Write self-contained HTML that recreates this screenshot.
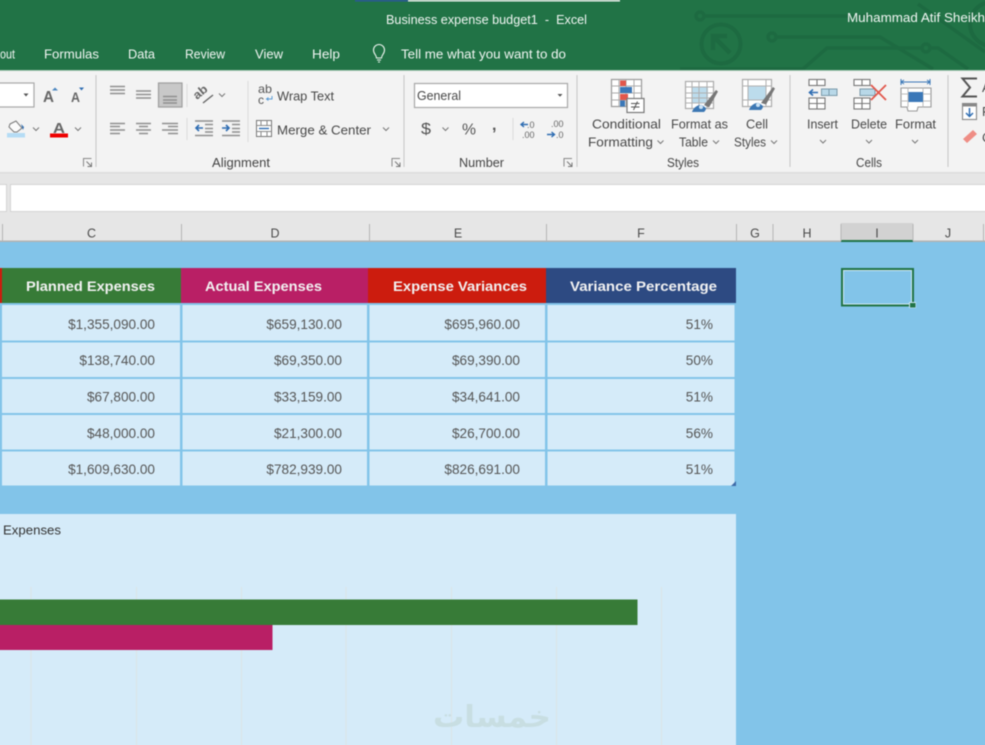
<!DOCTYPE html>
<html><head><meta charset="utf-8"><title>Business expense budget1 - Excel</title>
<style>
html,body{margin:0;padding:0;background:#82c4e9;overflow:hidden;width:985px;height:745px}
#wrap{position:relative;width:985px;height:745px;overflow:hidden;contain:paint}
svg{display:block;position:absolute;left:-10px;top:-10px;filter:blur(.45px)}
text{font-family:"Liberation Sans",sans-serif}
.w{fill:#f1f6f3;font-size:13px}
.r{fill:#474747;font-size:13px}
.n{fill:#555;font-size:13.6px;text-anchor:end}
.h{fill:#f2f2f2;font-size:13.5px;font-weight:bold}
.c{fill:#444;font-size:13px;text-anchor:middle}
.ln{stroke:#8f8f8f;stroke-width:1.4;fill:none}
.chev{stroke:#777;stroke-width:1;fill:none}
</style></head><body><div id="wrap">
<svg width="1005" height="765" viewBox="-10 -10 1005 765" xmlns="http://www.w3.org/2000/svg">
<defs>
<g id="ch"><path class="chev" d="M-3-1.5 0 1.5 3-1.5"/></g>
<g id="lau"><path d="M-4 4V-4H4" stroke="#888" fill="none"/><path d="M-1-1 4 4M4 0V4H0" stroke="#777" fill="none"/></g>
</defs>
<!-- title bar -->
<rect x="-10" y="-10" width="1005" height="80" fill="#217346"/>
<rect x="355" width="53" height="1.5" fill="#2b579a"/>
<rect x="408" width="212" height="1.5" fill="#f4f4f4"/>
<g stroke="#1d6a41" stroke-width="3.4" fill="none">
<circle cx="700" cy="16" r="4"/><path d="M704 16H870"/>
<circle cx="721" cy="44" r="19.5" stroke-width="4"/>
<path d="M715 38 730 53M713 50V36H727" stroke-width="4.5"/>
<circle cx="772" cy="37" r="4"/><path d="M776 37H880L933 69"/>
<path d="M803 69 827 48H922"/><circle cx="926" cy="48" r="4"/><path d="M930 48H938L968 69"/>
<path d="M918 4 985 52"/><circle cx="992" cy="24" r="22" stroke-width="4"/>
<path d="M680 69H803"/>
</g>
<text class="w" x="386" y="24" textLength="201" lengthAdjust="spacingAndGlyphs" xml:space="preserve">Business expense budget1  -  Excel</text>
<text class="w" x="847" y="22" textLength="138" lengthAdjust="spacingAndGlyphs">Muhammad Atif Sheikh</text>
<text class="w" x="0" y="58.5" textLength="15" lengthAdjust="spacingAndGlyphs">out</text>
<text class="w" x="44" y="58.5" textLength="55" lengthAdjust="spacingAndGlyphs">Formulas</text>
<text class="w" x="128" y="58.5" textLength="27" lengthAdjust="spacingAndGlyphs">Data</text>
<text class="w" x="185" y="58.5" textLength="40" lengthAdjust="spacingAndGlyphs">Review</text>
<text class="w" x="255" y="58.5" textLength="28" lengthAdjust="spacingAndGlyphs">View</text>
<text class="w" x="312" y="58.5" textLength="28" lengthAdjust="spacingAndGlyphs">Help</text>
<path d="M376.5 58c0-3-3-4-3-8a5.5 5.5 0 0 1 11 0c0 4-3 5-3 8zM377 60h4M378 62h2" fill="none" stroke="#eef5f0" stroke-width="1.1"/>
<text class="w" x="401" y="58.5" textLength="165" lengthAdjust="spacingAndGlyphs">Tell me what you want to do</text>
<!-- ribbon -->
<rect x="-10" y="70" width="1005" height="102" fill="#f3f3f3"/>
<rect x="-10" y="70" width="1005" height="1" fill="#a9c9b6"/>
<rect x="-10" y="172" width="1005" height="70" fill="#e6e6e6"/>
<rect x="-10" y="172" width="1005" height="1.5" fill="#dcdcdc"/>
<g stroke="#c6c6c6" stroke-width="1">
<path d="M96 75V167M404 75V167M577 75V167M790 75V167M948 75V167"/>
<path d="M187 84V107M187 118V140M248 81V142M513 118V140" stroke="#dadada"/>
</g>
<!-- font area -->
<rect x="-12" y="83" width="46" height="24" fill="#fff" stroke="#a8a8a8" stroke-width="1.2"/>
<path d="M23.5 93.5h5l-2.5 3z" fill="#555"/>
<text x="43" y="102" font-size="16" font-weight="bold" fill="#666" textLength="11" lengthAdjust="spacingAndGlyphs">A</text>
<path d="M52 90.5h6l-3-3z" fill="#4a86c0"/>
<text x="71" y="102" font-size="13.5" font-weight="bold" fill="#666" textLength="9" lengthAdjust="spacingAndGlyphs">A</text>
<path d="M79 87.5h5l-2.5 3z" fill="#2f6db2"/>
<path d="M10 124l6-3 6 7-5 4h-3l-5-5z" fill="#fbfbfb" stroke="#777"/>
<path d="M21 124l3 3-1 3z" fill="#2f6db2"/>
<rect x="7" y="133" width="18" height="4.5" fill="#b5dcf5"/>
<use href="#ch" x="36" y="129"/>
<text x="53" y="133" font-size="15" font-weight="bold" fill="#666" textLength="12" lengthAdjust="spacingAndGlyphs">A</text>
<rect x="50" y="133.5" width="18" height="4" fill="#ee0000"/>
<use href="#ch" x="78" y="129"/>
<use href="#lau" x="87.5" y="162.5"/>
<!-- alignment -->
<g class="ln">
<path d="M110 86.500h15M110 90h15M110 93.500h15"/>
<path d="M136 91h15M136 94.500h15M136 98h15"/>
</g>
<rect x="158.500" y="83" width="23.500" height="24" fill="#c8c8c8" stroke="#9d9d9d" stroke-width="1.2"/>
<path class="ln" d="M163 96.500h14M163 100h14M163 103h14"/>
<g class="ln">
<path d="M110 123.500h15M110 126.500h10M110 130h15M110 133.500h10"/>
<path d="M136 123.500h15M139 126.500h9M136 130h15M139 133.500h9"/>
<path d="M162 123.500h16M168 126.500h10M162 130h16M168 133.500h10"/>
</g>
<text x="0" y="0" transform="translate(197 100) rotate(-40)" font-size="12" font-weight="bold" fill="#666" textLength="15" lengthAdjust="spacingAndGlyphs">ab</text>
<path d="M203 103 213 95" stroke="#666" stroke-width="1.4" fill="none"/>
<use href="#ch" x="222" y="95"/>
<g class="ln"><path d="M195 121h18M205 124.500h8M205 128.500h8M205 132h8M195 135.500h18M222 121h18M232 124.500h8M232 128.500h8M232 132h8M222 135.500h18"/></g>
<path d="M196 128h7M199 125l-3 3 3 3" stroke="#2f6db2" stroke-width="1.6" fill="none"/>
<path d="M222 128h7M226 125l3 3-3 3" stroke="#2f6db2" stroke-width="1.6" fill="none"/>
<text x="258" y="93" font-size="12" fill="#555" textLength="14" lengthAdjust="spacingAndGlyphs">ab</text>
<text x="258" y="104" font-size="12" fill="#555">c</text>
<path d="M272 96v3h-5M268.500 97.500l-2 1.500 2 1.500" stroke="#5a9bd5" fill="none"/>
<text class="r" x="277" y="100.500" textLength="57" lengthAdjust="spacingAndGlyphs">Wrap Text</text>
<rect x="256.500" y="120.500" width="15" height="16" fill="#fff" stroke="#777"/>
<path d="M256.500 125.500h15M256.500 131.500h15M261 120.500v5M267 120.500v5M261 131.500v5M267 131.500v5" stroke="#888"/>
<path d="M259 128.500h10" stroke="#2f6db2" stroke-width="1.4"/>
<text class="r" x="277" y="134.500" textLength="94" lengthAdjust="spacingAndGlyphs">Merge &amp; Center</text>
<use href="#ch" x="386" y="129"/>
<use href="#lau" x="396" y="162.500"/>
<text class="c" x="241" y="167" textLength="58" lengthAdjust="spacingAndGlyphs">Alignment</text>
<!-- number -->
<rect x="414.500" y="83.500" width="153" height="24" fill="#fff" stroke="#a8a8a8" stroke-width="1.2"/>
<text class="r" x="417" y="100" textLength="44" lengthAdjust="spacingAndGlyphs">General</text>
<path d="M557.500 94h5l-2.500 2.800z" fill="#555"/>
<text x="421" y="134" font-size="16" fill="#555" textLength="10" lengthAdjust="spacingAndGlyphs">$</text>
<use href="#ch" x="445.500" y="129"/>
<text x="462" y="134.500" font-size="16" fill="#555" textLength="14" lengthAdjust="spacingAndGlyphs">%</text>
<text x="492" y="130" font-size="16" font-weight="bold" fill="#555">,</text>
<text x="527" y="128" font-size="9" fill="#666">.0</text><text x="522" y="138" font-size="9" fill="#666">.00</text>
<path d="M521 124.500h7M524 122l-3 2.500 3 2.500" stroke="#2f6db2" stroke-width="1.4" fill="none"/>
<text x="551" y="127" font-size="9" fill="#666">.00</text><text x="556" y="138" font-size="9" fill="#666">.0</text>
<path d="M547 134.500h7M551.500 132l3 2.500-3 2.500" stroke="#2f6db2" stroke-width="1.4" fill="none"/>
<use href="#lau" x="568" y="162.500"/>
<text class="c" x="481.500" y="167" textLength="45" lengthAdjust="spacingAndGlyphs">Number</text>
<!-- styles icons -->
<rect x="611.500" y="79.500" width="30" height="27" fill="#fff" stroke="#999" stroke-width="1.2"/>
<path d="M611.500 86h30M611.500 93h30M611.500 100h30M619 79.500v27M626 79.500v27M634 79.500v27" stroke="#aaa"/>
<rect x="620" y="80.500" width="6" height="5.500" fill="#e2574c"/>
<rect x="620" y="87" width="12" height="6" fill="#3b78b8"/>
<rect x="620" y="94" width="8" height="6" fill="#e2574c"/>
<rect x="620" y="100.500" width="5" height="6" fill="#3b78b8"/>
<rect x="627" y="98.500" width="17" height="14" fill="#fff" stroke="#777" stroke-width="1.2"/>
<path d="M631 103.500h8.500M631 107h8.500M637.500 101.500l-4 8.500" stroke="#555" fill="none"/>
<rect x="685.500" y="81.500" width="28" height="27" fill="#fff" stroke="#aaa" stroke-width="1.2"/>
<rect x="692" y="87" width="16" height="16" fill="#bcdcec"/>
<path d="M685.500 87h28M685.500 93h28M685.500 98h28M685.500 103h28M692 81.500v27M699 81.500v27M707 81.500v27" stroke="#b0b0b0"/>
<path d="M704 105 716 90l2 1.500-9 16z" fill="#777"/>
<path d="M692 112c1-4 6-8 10-7l4 3c0 2-1 3-2 4z" fill="#3d78b4"/><circle cx="701" cy="107" r="2" fill="#cbe3f5"/>
<rect x="742.500" y="79.500" width="29" height="27" fill="#fff" stroke="#aaa" stroke-width="1.2"/>
<rect x="748" y="86" width="18" height="14" fill="#bcdcec"/>
<path d="M748 79.500v27M766 79.500v27M742.500 86h29M742.500 100h29" stroke="#b0b0b0"/>
<path d="M761 103 773 87l2 1.500-9 16z" fill="#777"/>
<path d="M749 110c1-4 6-8 10-7l4 3c0 2-1 3-2 4z" fill="#3d78b4"/><circle cx="758" cy="105" r="2" fill="#cbe3f5"/>
<text class="r" x="592" y="128.500" textLength="69" lengthAdjust="spacingAndGlyphs">Conditional</text>
<text class="r" x="588" y="146.500" textLength="65" lengthAdjust="spacingAndGlyphs">Formatting</text>
<use href="#ch" x="660.500" y="142"/>
<text class="r" x="671" y="128.500" textLength="57" lengthAdjust="spacingAndGlyphs">Format as</text>
<text class="r" x="679" y="146.500" textLength="29" lengthAdjust="spacingAndGlyphs">Table</text>
<use href="#ch" x="716" y="142"/>
<text class="r" x="746" y="128.500" textLength="22" lengthAdjust="spacingAndGlyphs">Cell</text>
<text class="r" x="734" y="146.500" textLength="32" lengthAdjust="spacingAndGlyphs">Styles</text>
<use href="#ch" x="774" y="142"/>
<text class="c" x="683" y="167" textLength="32" lengthAdjust="spacingAndGlyphs">Styles</text>
<!-- cells icons -->
<g fill="#fff" stroke="#777" stroke-width="1.1">
<rect x="809" y="79.500" width="16" height="6"/><path d="M817 79.500v6" fill="none"/>
<rect x="809" y="98" width="16" height="11"/><path d="M817 98v11M809 103.500h16" fill="none"/>
<rect x="854" y="79.500" width="16" height="6"/><path d="M862 79.500v6" fill="none"/>
<rect x="854" y="98" width="16" height="11"/><path d="M862 98v11M854 103.500h16" fill="none"/>
</g>
<rect x="821.500" y="89" width="15.500" height="6.500" fill="#b8d8e8" stroke="#7a9aaa"/><path d="M829 89v6.500" stroke="#7a9aaa"/>
<path d="M810 92.500h8M813 89.500l-3.500 3 3.500 3" stroke="#2f6db2" stroke-width="1.6" fill="none"/>
<rect x="860" y="89" width="15" height="6.500" fill="#b8d8e8" stroke="#7a9aaa"/>
<path d="M871 85 886 100M886 85 871 100" stroke="#e2574c" stroke-width="1.8"/>
<path d="M901 82h29M901 79v6M930 79v6M904 80l-3 2 3 2M927 80l3 2-3 2" stroke="#3b78b8" fill="none"/>
<path d="M901 88h30v19h-13l-1 4h-9l-1-4h-6z" fill="#fff" stroke="#999" stroke-width="1.1"/>
<path d="M901 94h30M901 101h30M908 88v19M923 88v19" stroke="#bbb"/>
<rect x="908.500" y="92" width="14.500" height="10" fill="#3b78b8"/>
<text class="r" x="807" y="128.500" textLength="31" lengthAdjust="spacingAndGlyphs">Insert</text>
<text class="r" x="851" y="128.500" textLength="36" lengthAdjust="spacingAndGlyphs">Delete</text>
<text class="r" x="895" y="128.500" textLength="41" lengthAdjust="spacingAndGlyphs">Format</text>
<use href="#ch" x="823" y="141.500"/><use href="#ch" x="869" y="141.500"/><use href="#ch" x="915" y="141.500"/>
<text class="c" x="869" y="167" textLength="26" lengthAdjust="spacingAndGlyphs">Cells</text>
<path d="M977 78.500H962.500L970 87.500 962.500 96.500H977" fill="none" stroke="#555" stroke-width="2"/>
<text class="r" x="982" y="92">A</text>
<rect x="962.500" y="103.500" width="14" height="16" fill="#fff" stroke="#888" stroke-width="1.1"/>
<rect x="962.500" y="103.500" width="14" height="3" fill="#888"/>
<path d="M969.500 108v8M966 113l3.500 3.500 3.500-3.500" stroke="#2f6db2" stroke-width="1.5" fill="none"/>
<text class="r" x="982" y="116">F</text>
<path d="M963 139 973 130l4 4-10 9z" fill="#ef8d85"/>
<text class="r" x="982" y="142">C</text>
<!-- formula bar -->
<rect x="-12" y="184.500" width="18.500" height="27" fill="#fff" stroke="#d4d4d4"/>
<rect x="10.500" y="184.500" width="990" height="27" fill="#fff" stroke="#d4d4d4"/>
<!-- column headers -->
<rect x="841" y="223" width="72" height="18" fill="#d2d2d2"/>
<rect x="-10" y="240.500" width="1005" height="1.500" fill="#b3b3b3"/>
<rect x="841" y="240" width="72" height="2" fill="#217346"/>
<path d="M2.500 224V241M181.500 224V241M369.500 224V241M546.500 224V241M736.500 224V241M773 224V241M841 224V241M913 224V241M983.500 224V241" stroke="#b5b5b5"/>
<g font-size="12.500" fill="#4a4a4a" text-anchor="middle">
<text x="91.500" y="237.500">C</text><text x="275" y="237.500">D</text><text x="458" y="237.500">E</text><text x="641" y="237.500">F</text>
<text x="755" y="237.500">G</text><text x="807" y="237.500">H</text><text x="877" y="237.500">I</text><text x="948" y="237.500">J</text>
</g>
<!-- sheet -->
<rect x="-10" y="242" width="1005" height="513" fill="#82c4e9"/>
<!-- table head -->
<rect x="-10" y="268" width="12" height="35" fill="#cc1c0e"/>
<rect x="2" y="268" width="179" height="35" fill="#377b37"/>
<rect x="181" y="268" width="187" height="35" fill="#b91f65"/>
<rect x="368" y="268" width="178" height="35" fill="#cc1c0e"/>
<rect x="546" y="268" width="190" height="35" fill="#2d4a82"/>
<text class="h" x="26" y="291" textLength="129" lengthAdjust="spacingAndGlyphs">Planned Expenses</text>
<text class="h" x="205" y="291" textLength="117" lengthAdjust="spacingAndGlyphs">Actual Expenses</text>
<text class="h" x="393" y="291" textLength="134" lengthAdjust="spacingAndGlyphs">Expense Variances</text>
<text class="h" x="570" y="291" textLength="147" lengthAdjust="spacingAndGlyphs">Variance Percentage</text>
<!-- cells -->
<g fill="#d5ebf9">
<rect x="2" y="305" width="178" height="35.500"/><rect x="182.500" y="305" width="184.500" height="35.500"/><rect x="369.500" y="305" width="175.500" height="35.500"/><rect x="547.500" y="305" width="187" height="35.500"/>
<rect x="2" y="342.500" width="178" height="34.500"/><rect x="182.500" y="342.500" width="184.500" height="34.500"/><rect x="369.500" y="342.500" width="175.500" height="34.500"/><rect x="547.500" y="342.500" width="187" height="34.500"/>
<rect x="2" y="379" width="178" height="34"/><rect x="182.500" y="379" width="184.500" height="34"/><rect x="369.500" y="379" width="175.500" height="34"/><rect x="547.500" y="379" width="187" height="34"/>
<rect x="2" y="415" width="178" height="34.500"/><rect x="182.500" y="415" width="184.500" height="34.500"/><rect x="369.500" y="415" width="175.500" height="34.500"/><rect x="547.500" y="415" width="187" height="34.500"/>
<rect x="2" y="451.500" width="178" height="34"/><rect x="182.500" y="451.500" width="184.500" height="34"/><rect x="369.500" y="451.500" width="175.500" height="34"/><rect x="547.500" y="451.500" width="187" height="34"/>
</g>
<path d="M731 486h5v-5z" fill="#3d6aa8"/>
<g class="n">
<text x="155" y="329">$1,355,090.00</text><text x="342" y="329">$659,130.00</text><text x="520" y="329">$695,960.00</text><text x="713" y="329">51%</text>
<text x="155" y="365">$138,740.00</text><text x="342" y="365">$69,350.00</text><text x="520" y="365">$69,390.00</text><text x="713" y="365">50%</text>
<text x="155" y="401.500">$67,800.00</text><text x="342" y="401.500">$33,159.00</text><text x="520" y="401.500">$34,641.00</text><text x="713" y="401.500">51%</text>
<text x="155" y="438">$48,000.00</text><text x="342" y="438">$21,300.00</text><text x="520" y="438">$26,700.00</text><text x="713" y="438">56%</text>
<text x="155" y="474">$1,609,630.00</text><text x="342" y="474">$782,939.00</text><text x="520" y="474">$826,691.00</text><text x="713" y="474">51%</text>
</g>
<!-- selected cell -->
<rect x="842" y="269" width="71" height="36.500" fill="none" stroke="#217346" stroke-width="2"/>
<rect x="843.500" y="270.500" width="68" height="33.500" fill="none" stroke="#cfe7f5"/>
<rect x="909" y="302" width="7" height="6" fill="#cfe7f5"/>
<rect x="910" y="303" width="5.500" height="4.500" fill="#217346"/>
<!-- chart -->
<rect x="-10" y="514" width="746" height="241" fill="#d5ebf9"/>
<path d="M31 587V755M136.500 587V755M241.500 587V755M346 587V755M451.500 587V755M556.500 587V755M661.500 587V755" stroke="#dbe5e8" stroke-width="1.2"/>
<rect x="-10" y="599.500" width="647.500" height="25.500" fill="#377b37"/>
<rect x="-10" y="625" width="282.500" height="25" fill="#b91f65"/>
<text x="3" y="534.500" font-size="13" fill="#333" textLength="58" lengthAdjust="spacingAndGlyphs">Expenses</text>
<text x="492" y="727" font-size="30" font-weight="bold" fill="#c8dee2" text-anchor="middle" textLength="118" lengthAdjust="spacingAndGlyphs" style="font-family:'DejaVu Sans',sans-serif" direction="rtl">خمسات</text>
</svg>
</div></body></html>
